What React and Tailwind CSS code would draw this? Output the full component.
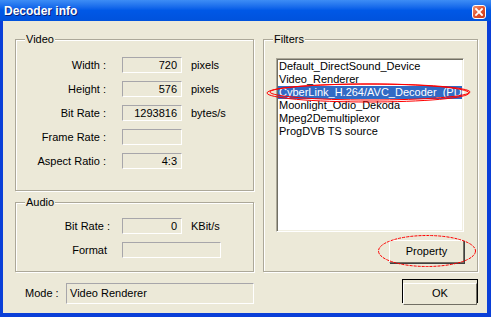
import React from "react";

const font = { fontFamily: '"Liberation Sans", Arial, sans-serif' };

const Field = ({ value, className = "" }) => (
  <div
    className={`h-[16px] border border-t-[#A7A6AA] border-l-[#A7A6AA] border-b-white border-r-white bg-[#ECE9D8] text-right pr-[4px] text-[11px] leading-[15px] text-black ${className}`}
  >
    {value}
  </div>
);

const GroupBox = ({ label, className = "", children }) => (
  <div
    className={`relative border border-[#ACA899] shadow-[inset_1px_1px_0_#ffffff,1px_1px_0_#ffffff] ${className}`}
  >
    <span className="absolute -top-[7px] left-[9px] px-[1px] bg-[#ECE9D8] text-[11px] leading-[13px] text-black">
      {label}
    </span>
    {children}
  </div>
);

const videoRows = [
  { label: "Width :", value: "720", unit: "pixels" },
  { label: "Height :", value: "576", unit: "pixels" },
  { label: "Bit Rate :", value: "1293816", unit: "bytes/s" },
  { label: "Frame Rate :", value: "", unit: "" },
  { label: "Aspect Ratio :", value: "4:3", unit: "" },
];

const filters = [
  "Default_DirectSound_Device",
  "Video_Renderer",
  "CyberLink_H.264/AVC_Decoder_(PDVD",
  "Moonlight_Odio_Dekoda",
  "Mpeg2Demultiplexor",
  "ProgDVB TS source",
];

export default function App() {
  return (
    <div
      className="relative w-[491px] h-[317px] bg-[#0A3FD8] overflow-hidden text-black"
      style={font}
    >
      {/* Title bar */}
      <div className="h-[21px] flex items-center justify-between bg-gradient-to-b from-[#3D8DF5] via-[#0058E6] to-[#0052DC] pl-[4px] pr-[5px]">
        <span className="text-white font-bold text-[12px] leading-[14px] [text-shadow:1px_1px_0_#0A1F75]">
          Decoder info
        </span>
        <div className="w-[14px] h-[14px] mt-[3px] rounded-[3px] border border-white bg-gradient-to-br from-[#F0926E] via-[#E2522C] to-[#C8391A] flex items-center justify-center">
          <svg width="8" height="8" viewBox="0 0 8 8">
            <path d="M1 1 L7 7 M7 1 L1 7" stroke="white" strokeWidth="1.8" strokeLinecap="square" />
          </svg>
        </div>
      </div>

      {/* Body */}
      <div className="ml-[3px] mr-[4px] h-[292px] bg-[#ECE9D8] flex pl-[12px] pt-[18px]">
        {/* Left column */}
        <div className="w-[239px] flex flex-col">
          <GroupBox label="Video" className="h-[152px]">
            <div className="pt-[17px] flex flex-col gap-[8px]">
              {videoRows.map((r) => (
                <div key={r.label} className="flex items-center h-[16px]">
                  <span className="w-[90px] text-right text-[11px] leading-[13px]">{r.label}</span>
                  <Field value={r.value} className="ml-[16px] w-[60px]" />
                  <span className="ml-[9px] text-[11px] leading-[13px]">{r.unit}</span>
                </div>
              ))}
            </div>
          </GroupBox>

          <GroupBox label="Audio" className="mt-[11px] h-[70px]">
            <div className="pt-[15px] flex flex-col gap-[8px]">
              <div className="flex items-center h-[16px]">
                <span className="w-[94px] text-right text-[11px] leading-[13px]">Bit Rate :</span>
                <Field value="0" className="ml-[12px] w-[60px]" />
                <span className="ml-[9px] text-[11px] leading-[13px]">KBit/s</span>
              </div>
              <div className="flex items-center h-[16px]">
                <span className="w-[91px] text-right text-[11px] leading-[13px]">Format</span>
                <Field value="" className="ml-[15px] w-[99px]" />
              </div>
            </div>
          </GroupBox>

          <div className="mt-[11px] flex items-center h-[21px]">
            <span className="ml-[10px] w-[41px] text-[11px] leading-[13px]">Mode :</span>
            <div className="flex-1 h-[21px] border border-t-[#A7A6AA] border-l-[#A7A6AA] border-b-white border-r-white pl-[3px] text-[11px] leading-[19px]">
              Video Renderer
            </div>
          </div>
        </div>

        {/* Right column */}
        <div className="ml-[9px] w-[215px] flex flex-col">
          <GroupBox label="Filters" className="h-[233px]">
            <div className="ml-[12px] mt-[18px] w-[188px]">
              <div className="h-[174px] bg-white border border-t-[#ACA899] border-l-[#ACA899] border-b-white border-r-white shadow-[inset_1px_1px_0_#716F64,inset_-1px_-1px_0_#F1EFE2] p-[1px] overflow-hidden">
                {filters.map((f, i) => (
                  <div
                    key={f}
                    className={`h-[13px] leading-[13px] text-[11px] pl-[1px] whitespace-nowrap overflow-hidden ${
                      i === 2 ? "bg-[#316AC5] text-white" : "text-black"
                    }`}
                  >
                    {f}
                  </div>
                ))}
              </div>
              <div className="mt-[8px] flex justify-end">
                <button className="w-[75px] h-[23px] bg-[#ECE9D8] border border-t-white border-l-white border-b-[#716F64] border-r-[#716F64] shadow-[1px_1px_0_#404040] text-[11px] leading-[13px]">
                  Property
                </button>
              </div>
            </div>
          </GroupBox>

          <div className="mt-[7px] flex justify-end">
            <div className="w-[76px] h-[24px] border border-black">
              <button className="w-full h-full bg-[#ECE9D8] border border-t-white border-l-white border-b-[#716F64] border-r-[#716F64] text-[11px] leading-[13px]">
                OK
              </button>
            </div>
          </div>
        </div>
      </div>

      {/* Red annotation ellipses */}
      <svg className="absolute left-[265px] top-[81px]" width="208" height="24" viewBox="0 0 208 24">
        <ellipse cx="103" cy="12" rx="101" ry="9" fill="none" stroke="#FF0000" strokeWidth="1" />
        <ellipse cx="105" cy="11" rx="100" ry="8" fill="none" stroke="#FF0000" strokeWidth="1" />
      </svg>
      <svg className="absolute left-[376px] top-[233px]" width="102" height="36" viewBox="0 0 102 36">
        <ellipse cx="51" cy="18" rx="48.5" ry="15.5" fill="none" stroke="#FF0000" strokeWidth="1" strokeDasharray="3 1" />
      </svg>
    </div>
  );
}
